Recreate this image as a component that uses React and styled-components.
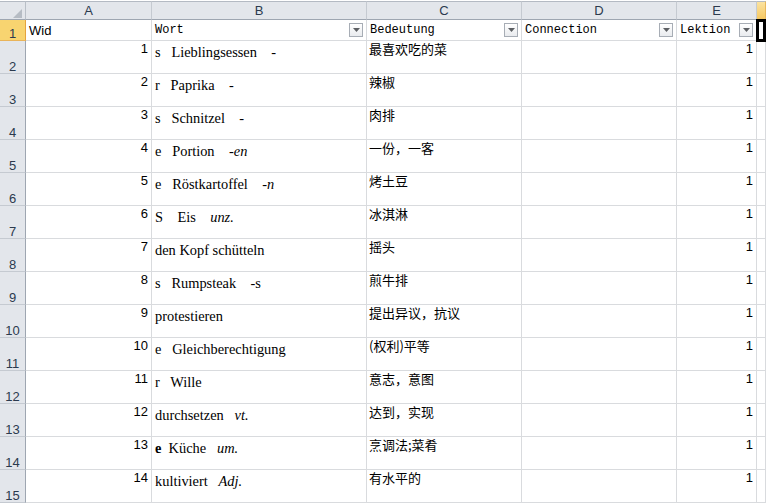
import React from "react";
import styled, { createGlobalStyle, css } from "styled-components";

const GlobalStyle = createGlobalStyle`
  html, body {
    margin: 0;
    padding: 0;
    background: #ffffff;
    overflow: hidden;
  }
`;

const Sheet = styled.div`
  display: grid;
  grid-template-columns: 26px 126px 215px 155px 155px 80px 1fr;
  grid-template-rows: 19px 21px repeat(14, 33px);
  width: 766px;
  height: 503px;
  border-top: 1px solid #ffffff;
  box-sizing: border-box;
  overflow: hidden;
  background: #ffffff;
`;

const headerBase = css`
  box-sizing: border-box;
  background: #e3e6eb;
  font-family: "Liberation Sans", Arial, sans-serif;
  font-size: 13px;
  color: #2b3a4e;
  display: flex;
`;

const Corner = styled.div`
  ${headerBase};
  border-top: 1px solid #b4bac3;
  border-right: 1px solid #b9bfc7;
  border-bottom: 1px solid #9ea6b1;
  align-items: flex-end;
  justify-content: flex-end;
  padding: 0 3px 1px 0;
`;

const ColHeader = styled.div`
  ${headerBase};
  border-top: 1px solid #b4bac3;
  border-right: 1px solid #c5cad1;
  border-bottom: 1px solid #9ea6b1;
  align-items: center;
  justify-content: center;
  line-height: 15px;
  ${(p) =>
    p.$active &&
    css`
      background: linear-gradient(#fbe3a1, #f6c862);
      border-bottom-color: #e8a13c;
      border-right-color: #e8b85c;
    `}
`;

const RowHeader = styled.div`
  ${headerBase};
  border-right: 1px solid #9ea6b1;
  border-bottom: 1px solid #c5cad1;
  align-items: flex-end;
  justify-content: center;
  line-height: 13px;
  ${(p) =>
    p.$active &&
    css`
      background: #f8d470;
      border-right-color: #e5a33d;
      border-bottom-color: #e9b45a;
    `}
`;

const kinds = {
  num: css`
    font-family: "Liberation Sans", Arial, sans-serif;
    font-size: 13px;
    line-height: 15px;
    justify-content: flex-end;
    padding: 0 3px 0 2px;
    color: #000;
  `,
  de: css`
    font-family: "Liberation Serif", "Times New Roman", serif;
    font-size: 14.4px;
    line-height: 17px;
    padding: 3px 2px 0 3px;
    color: #000;
  `,
  zh: css`
    font-family: "Noto Sans CJK SC", "Liberation Sans", sans-serif;
    font-size: 13px;
    line-height: 19px;
    padding: 0 2px 0 2px;
    margin-top: 0;
    color: #000;
  `,
  sans: css`
    font-family: "Liberation Sans", Arial, sans-serif;
    font-size: 13px;
    line-height: 15px;
    padding: 0 2px 0 3px;
    align-items: center;
    color: #000;
  `,
  mono: css`
    font-family: "Liberation Mono", "Courier New", monospace;
    font-size: 12px;
    line-height: 15px;
    padding: 0 2px 0 3px;
    align-items: center;
    color: #000;
  `,
};

const Cell = styled.div`
  box-sizing: border-box;
  display: flex;
  align-items: flex-start;
  border-right: 1px solid #d9dbde;
  border-bottom: 1px solid #d9dbde;
  white-space: pre;
  min-width: 0;
  ${(p) => kinds[p.$kind || "de"]};
`;

const ZhText = styled.span`
  position: relative;
  top: -2px;
`;

const SelectedCell = styled.div`
  box-sizing: border-box;
  position: relative;
  z-index: 1;
  margin: -1px 0 -1px -1px;
  box-shadow: inset 0 0 0 3px #000;
  background: #fff;
`;

const Label = styled.span``;

const FilterButton = styled.span`
  box-sizing: border-box;
  flex: none;
  width: 14px;
  height: 14px;
  margin-left: auto;
  margin-right: 1px;
  border: 1px solid #a7adb5;
  background: linear-gradient(#ffffff, #e9ebee);
  display: flex;
  align-items: center;
  justify-content: center;
`;

const Seg = styled.span`
  font-style: ${(p) => (p.$i ? "italic" : "normal")};
  font-weight: ${(p) => (p.$b ? "bold" : "normal")};
`;

const CornerMark = () => (
  <svg width="9" height="9" viewBox="0 0 9 9">
    <polygon points="9,0 9,9 0,9" fill="#b6bcc4" />
  </svg>
);

const Arrow = () => (
  <svg width="7" height="4" viewBox="0 0 7 4">
    <polygon points="0,0 7,0 3.5,4" fill="#5c5f63" />
  </svg>
);

const rows = [
  { n: 1, b: [["s   Lieblingsessen    -"]], c: "最喜欢吃的菜" },
  { n: 2, b: [["r   Paprika    -"]], c: "辣椒" },
  { n: 3, b: [["s   Schnitzel    -"]], c: "肉排" },
  { n: 4, b: [["e   Portion    -"], ["en", "i"]], c: "一份，一客" },
  { n: 5, b: [["e   Röstkartoffel    -"], ["n", "i"]], c: "烤土豆" },
  { n: 6, b: [["S    Eis    "], ["unz.", "i"]], c: "冰淇淋" },
  { n: 7, b: [["den Kopf schütteln"]], c: "摇头" },
  { n: 8, b: [["s   Rumpsteak    -s"]], c: "煎牛排" },
  { n: 9, b: [["protestieren"]], c: "提出异议，抗议" },
  { n: 10, b: [["e   Gleichberechtigung"]], c: "(权利)平等" },
  { n: 11, b: [["r   Wille"]], c: "意志，意图" },
  { n: 12, b: [["durchsetzen   "], ["vt.", "i"]], c: "达到，实现" },
  { n: 13, b: [["e", "b"], ["  Küche   "], ["um.", "i"]], c: "烹调法;菜肴" },
  { n: 14, b: [["kultiviert   "], ["Adj.", "i"]], c: "有水平的" },
];

const FilterHeader = ({ text }) => (
  <Cell $kind="mono">
    <Label>{text}</Label>
    <FilterButton>
      <Arrow />
    </FilterButton>
  </Cell>
);

export default function App() {
  return (
    <>
      <GlobalStyle />
      <Sheet>
        <Corner>
          <CornerMark />
        </Corner>
        {["A", "B", "C", "D", "E"].map((l) => (
          <ColHeader key={l}>{l}</ColHeader>
        ))}
        <ColHeader $active />

        <RowHeader $active>1</RowHeader>
        <Cell $kind="sans">Wid</Cell>
        <FilterHeader text="Wort" />
        <FilterHeader text="Bedeutung" />
        <FilterHeader text="Connection" />
        <FilterHeader text="Lektion" />
        <SelectedCell />

        {rows.map((r, idx) => (
          <React.Fragment key={r.n}>
            <RowHeader>{idx + 2}</RowHeader>
            <Cell $kind="num">{r.n}</Cell>
            <Cell $kind="de">
              {r.b.map(([t, f], k) => (
                <Seg key={k} $i={f === "i"} $b={f === "b"}>
                  {t}
                </Seg>
              ))}
            </Cell>
            <Cell $kind="zh">
              <ZhText>{r.c}</ZhText>
            </Cell>
            <Cell $kind="zh" />
            <Cell $kind="num">1</Cell>
            <Cell $kind="num" />
          </React.Fragment>
        ))}
      </Sheet>
    </>
  );
}
